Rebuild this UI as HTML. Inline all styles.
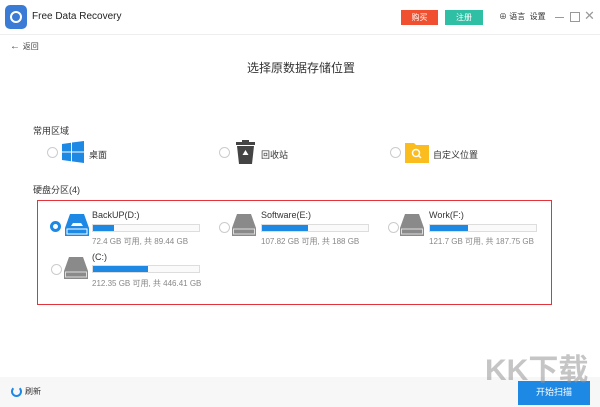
<!DOCTYPE html>
<html><head><meta charset="utf-8"><style>
body{margin:0;width:600px;height:407px;background:#fff;font-family:"Liberation Sans","Noto Sans CJK SC",sans-serif;position:relative;overflow:hidden;color:#333}
.a{position:absolute;white-space:nowrap}
.r{position:absolute;width:9px;height:9px;border:1px solid #ccc;border-radius:50%;background:#fff}
.bar{position:absolute;height:8px;width:108px;border:1px solid #ddd;background:#fafafa;box-sizing:border-box}
.bar i{display:block;height:100%;background:#1e88e5}
.t{font-size:9px;color:#333}
.s{font-size:8px;color:#888}
</style></head><body>
<div class="a" style="left:5px;top:5px;width:22px;height:24px;border-radius:5px;background:#3a7bd5"><div style="position:absolute;left:5px;top:6px;width:12px;height:12px;border-radius:50%;border:2px solid #fff;box-sizing:border-box"></div></div>
<div class="a" style="left:32px;top:11px;font-size:10px;color:#222">Free Data Recovery</div>
<div class="a" style="left:401px;top:10px;width:37px;height:15px;background:#f0502f;color:#fff;font-size:8px;text-align:center;line-height:15px">购买</div>
<div class="a" style="left:445px;top:10px;width:38px;height:15px;background:#2fbfa5;color:#fff;font-size:8px;text-align:center;line-height:15px">注册</div>
<div class="a" style="left:499px;top:11px;font-size:8px;color:#333">⊕ 语言 &nbsp;设置</div>
<div class="a" style="left:555px;top:17px;width:9px;height:1px;background:#999"></div>
<div class="a" style="left:570px;top:12px;width:8px;height:8px;border:1px solid #999"></div>
<div class="a" style="left:584px;top:8px;font-size:13px;color:#999">✕</div>
<div class="a" style="left:0;top:34px;width:600px;height:1px;background:#eee"></div>
<div class="a" style="left:10px;top:41px;font-size:10px;color:#444">← <span style="font-size:8px">返回</span></div>
<div class="a" style="left:247px;top:59px;font-size:12px;color:#333">选择原数据存储位置</div>
<div class="a t" style="left:33px;top:124px">常用区域</div>
<div class="r" style="left:47px;top:147px"></div>
<svg class="a" style="left:62px;top:141px" width="22" height="22"><path fill="#1e88e5" d="M0 3l9-1.3v8.8H0zM10 1.5L22 0v10.5H10zM0 11.5h9v8.8L0 19zM10 11.5h12V22l-12-1.6z"/></svg>
<div class="a t" style="left:89px;top:148px">桌面</div>
<div class="r" style="left:219px;top:147px"></div>
<svg class="a" style="left:235px;top:140px" width="21" height="24"><rect x="1" y="2" width="19" height="3" fill="#444"/><rect x="7" y="0" width="7" height="3" fill="#444"/><path d="M2 6h17l-2 18H4z" fill="#444"/><path d="M10.5 10l3 5h-6z" fill="#fff"/></svg>
<div class="a t" style="left:261px;top:148px">回收站</div>
<div class="r" style="left:390px;top:147px"></div>
<svg class="a" style="left:405px;top:141px" width="24" height="22"><path d="M0 2h9l2 2h13v18H0z" fill="#fbbc1e"/><circle cx="11" cy="12" r="3.5" stroke="#fff" stroke-width="1.5" fill="none"/><path d="M13.5 14.5l2.5 2.5" stroke="#fff" stroke-width="1.5"/></svg>
<div class="a t" style="left:433px;top:148px">自定义位置</div>
<div class="a t" style="left:33px;top:183px">硬盘分区(4)</div>
<div class="a" style="left:37px;top:200px;width:515px;height:105px;border:1.5px solid #e2343a;box-sizing:border-box"></div>
<div class="r" style="left:50px;top:221px;border:3px solid #1e88e5;width:5px;height:5px"></div>
<svg class="a" style="left:65px;top:214px" width="24" height="22"><path d="M5 0h14l5 14v8H0v-8z" fill="#1e88e5"/><path d="M8 9h8l2 3H6z" fill="#fff"/><rect x="2" y="15" width="20" height="5" fill="none" stroke="#fff" stroke-width="1"/></svg>
<div class="a t" style="left:92px;top:210px">BackUP(D:)</div>
<div class="bar" style="left:92px;top:224px"><i style="width:20%"></i></div>
<div class="a s" style="left:92px;top:236px">72.4 GB 可用, 共 89.44 GB</div>
<div class="r" style="left:219px;top:222px"></div>
<svg class="a" style="left:232px;top:214px" width="24" height="22"><path d="M5 0h14l5 14v8H0v-8z" fill="#8a8a8a"/><rect x="1.5" y="15" width="21" height="5" fill="none" stroke="#ddd" stroke-width="1"/></svg>
<div class="a t" style="left:261px;top:210px">Software(E:)</div>
<div class="bar" style="left:261px;top:224px"><i style="width:43%"></i></div>
<div class="a s" style="left:261px;top:236px">107.82 GB 可用, 共 188 GB</div>
<div class="r" style="left:388px;top:222px"></div>
<svg class="a" style="left:400px;top:214px" width="24" height="22"><path d="M5 0h14l5 14v8H0v-8z" fill="#8a8a8a"/><rect x="1.5" y="15" width="21" height="5" fill="none" stroke="#ddd" stroke-width="1"/></svg>
<div class="a t" style="left:429px;top:210px">Work(F:)</div>
<div class="bar" style="left:429px;top:224px"><i style="width:36%"></i></div>
<div class="a s" style="left:429px;top:236px">121.7 GB 可用, 共 187.75 GB</div>
<div class="r" style="left:51px;top:264px"></div>
<svg class="a" style="left:64px;top:257px" width="24" height="22"><path d="M5 0h14l5 14v8H0v-8z" fill="#8a8a8a"/><rect x="1.5" y="15" width="21" height="5" fill="none" stroke="#ddd" stroke-width="1"/></svg>
<div class="a t" style="left:92px;top:252px">(C:)</div>
<div class="bar" style="left:92px;top:265px"><i style="width:52%"></i></div>
<div class="a s" style="left:92px;top:278px">212.35 GB 可用, 共 446.41 GB</div>
<div class="a" style="left:0;top:377px;width:600px;height:30px;background:#f7f7f7"></div>
<div class="a" style="left:11px;top:386px;width:7px;height:7px;border:2px solid #1e88e5;border-top-color:transparent;border-radius:50%"></div>
<div class="a" style="left:25px;top:386px;font-size:8px;color:#333">刷新</div>
<div class="a" style="left:518px;top:381px;width:72px;height:24px;background:#1e88e5;color:#fff;font-size:9px;text-align:center;line-height:22px">开始扫描</div>
<div class="a" style="left:485px;top:345px;font-size:30px;font-weight:bold;color:rgba(150,150,150,.55)">KK下载</div>
</body></html>
